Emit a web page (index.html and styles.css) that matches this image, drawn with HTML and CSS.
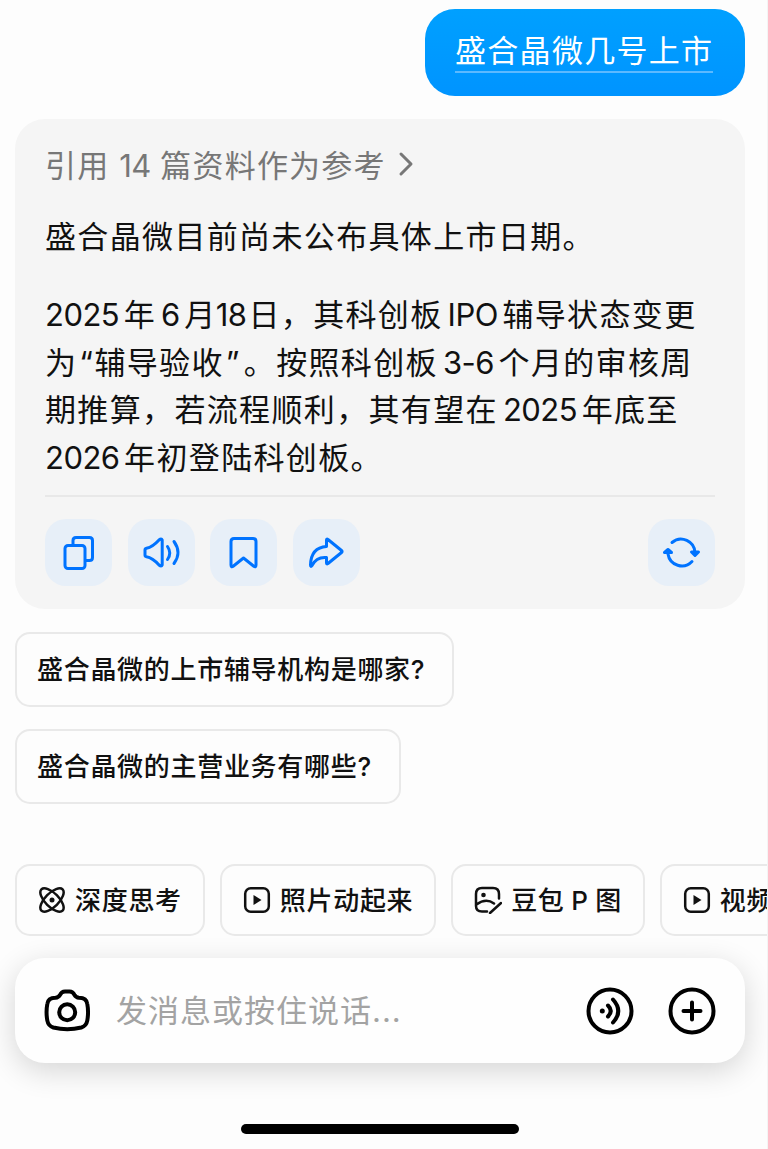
FILE: index.html
```html
<!DOCTYPE html>
<html lang="zh-CN">
  <head>
    <meta charset="UTF-8" />
    <meta name="viewport" content="width=device-width, initial-scale=1.0" />
    <title>豆包</title>
    <link rel="stylesheet" href="styles.css">
  </head>
  <body>
    <main class="chat">
      <div class="bubble"><span class="bubble-text">盛合晶微几号上市</span></div>

      <div class="answer">
        <div class="refs">
          <span>引用 <span class="num">14</span> 篇资料作为参考</span>
          <svg class="chevron" width="16" height="26" viewBox="0 0 16 26"><path d="M3 3 13 13 3 23" /></svg>
        </div>
        <p>盛合晶微目前尚未公布具体上市日期。</p>
        <p>
          <span class="line"><span class="latin first">2025</span>年<span class="latin">6</span>月<span class="latin tight">18</span>日，其科创板<span class="latin">IPO</span>辅导状态变更</span>
          <span class="line">为<span class="quote open">“</span>辅导验收<span class="quote close">”</span>。按照科创板<span class="latin">3-6</span>个月的审核周</span>
          <span class="line">期推算，若流程顺利，其有望在<span class="latin">2025</span>年底至</span>
          <span class="line"><span class="latin first">2026</span>年初登陆科创板。</span>
        </p>
        <div class="actions">
          <button class="action" aria-label="复制">
            <svg width="67" height="67" viewBox="0 0 67 67">
              <rect x="20" y="26.500" width="20" height="23" rx="3" />
              <path d="M28 25.500v-4q0-3 3-3h13.500q3 0 3 3v17q0 3-3 3H41" />
            </svg>
          </button>
          <button class="action" aria-label="朗读">
            <svg width="67" height="67" viewBox="0 0 67 67">
              <path d="M17 31q0-1.500 1.500-1.800 6-1 12.500-8.200 2.500-2 3.200 0v25q-.7 2-3.200 0-6.500-7.200-12.500-8.200-1.500-.3-1.500-1.800z" />
              <path d="M39.500 27.500q4.500 6.500 0 13M46 22.500q8 11 0 22" />
            </svg>
          </button>
          <button class="action" aria-label="收藏">
            <svg width="67" height="67" viewBox="0 0 67 67">
              <path d="M21 22.500q0-3 3-3h19q3 0 3 3v23.500q0 3-2.500 1L33.500 39 23.500 47q-2.500 2-2.500-1z" />
            </svg>
          </button>
          <button class="action" aria-label="分享">
            <svg width="67" height="67" viewBox="0 0 67 67">
              <path d="M33.500 21q0-1.500 1.500-.5L48.500 31.500q1.200 1 0 2L35 44.500q-1.500 1-1.500-.5v-5.500q-10-1-14.500 8-1.500 2-1.500-.5Q18 28.500 33.500 27.500z" />
            </svg>
          </button>
          <button class="action refresh" aria-label="重新生成">
            <svg width="67" height="67" viewBox="0 0 67 67">
              <path d="M24 23.500A14 14 0 0 1 47 34M44 42.500A14 14 0 0 1 20 35" />
              <path class="solid" d="M43.500 33h7L47 36.500zM16.500 33.500h7L20 30.500z" />
            </svg>
          </button>
        </div>
      </div>

      <div class="suggestions">
        <button class="chip suggestion">盛合晶微的上市辅导机构是哪家?</button>
        <button class="chip suggestion">盛合晶微的主营业务有哪些?</button>
      </div>
    </main>

    <nav class="tools">
      <button class="chip tool">
        <svg width="28" height="28" viewBox="0 0 28 28">
          <ellipse cx="14" cy="14" rx="15" ry="6.800" transform="rotate(45 14 14)" />
          <ellipse cx="14" cy="14" rx="15" ry="6.800" transform="rotate(-45 14 14)" />
          <circle class="dot" cx="14" cy="14" r="2.500" />
        </svg>
        <span>深度思考</span>
      </button>
      <button class="chip tool">
        <svg width="28" height="28" viewBox="0 0 28 28">
          <rect x="2.200" y="2.200" width="23.600" height="23.600" rx="5.500" />
          <path class="dot" d="M10.500 9v10l8-5z" />
        </svg>
        <span>照片动起来</span>
      </button>
      <button class="chip tool">
        <svg width="28" height="28" viewBox="0 0 28 28">
          <path d="M25 12.500V8q0-6-6-6H8Q2 2 2 8v12q0 5.500 6 5.500h5M2.500 18.500Q12 11.500 20 17.500M27 17 16 27" />
          <circle class="dot" cx="9.500" cy="9" r="2.300" />
        </svg>
        <span class="pic">豆包 P 图</span>
      </button>
      <button class="chip tool">
        <svg width="28" height="28" viewBox="0 0 28 28">
          <rect x="2.200" y="2.200" width="23.600" height="23.600" rx="5.500" />
          <path class="dot" d="M10.500 9v10l8-5z" />
        </svg>
        <span>视频</span>
      </button>
    </nav>

    <form class="composer">
      <svg width="48" height="48" viewBox="0 0 48 48">
        <path d="M17 8q1.500-3.500 5-3.500h4.500q3.500 0 5 3.500 1.500 2.500 4.500 2.800 7.500 0 8.300 6.200 1.500 8 0 16.500-1 5.500-6 7-14 3.500-28 0-5-1.500-6-7-1.500-8.500 0-16.500.8-6.200 8.200-6.200 3-.3 4.500-2.800z" />
        <circle cx="24.200" cy="25.200" r="8" />
      </svg>
      <input type="text" placeholder="发消息或按住说话..." />
      <svg width="48" height="48" viewBox="0 0 48 48">
        <circle cx="24" cy="24" r="21.500" />
        <path d="M22 18.500q5.500 5.500 0 11M27 12.500q10.500 11.500 0 23" />
        <circle class="dot" cx="16.300" cy="24" r="2.500" />
      </svg>
      <svg width="48" height="48" viewBox="0 0 48 48">
        <circle cx="24" cy="24" r="21.500" />
        <path d="M24 15.500v17M15.500 24h17" />
      </svg>
    </form>

    <div class="home-bar"></div>
  </body>
</html>
```
FILE: styles.css
```css
* {
  box-sizing: border-box;
  margin: 0;
  padding: 0;
}

body {
  width: 768px;
  height: 1149px;
  overflow: hidden;
  background-color: #fdfdfd;
  border-right: 1px solid #f4f4f4;
  font-family: Inter, "Noto Sans CJK SC", sans-serif;
  color: #111;
}

button,
input {
  font-family: inherit;
  border: none;
  background: none;
}

svg {
  flex: none;
  fill: none;
  stroke: currentColor;
  stroke-linecap: round;
  stroke-linejoin: round;
}

.chat {
  display: flex;
  flex-direction: column;
  padding: 9px 22px 0 15px;
}

/* User message */
.bubble {
  align-self: flex-end;
  width: 320px;
  height: 87px;
  padding: 20px 0 0 30px;
  border-radius: 30px;
  background: linear-gradient(#00a0ff, #0094ff);
  color: #fff;
}

.bubble-text {
  display: inline-block;
  height: 44px;
  border-bottom: 2px solid #5cb9ff;
  font-size: 31px;
  line-height: 44px;
  letter-spacing: 1.3px;
}

/* Answer card */
.answer {
  height: 490px;
  margin-top: 23px;
  padding: 20px 30px 0;
  border-radius: 30px;
  background-color: #f5f5f5;
}

.refs {
  display: flex;
  align-items: center;
  gap: 12px;
  height: 48px;
  color: #777;
  font-size: 31px;
  letter-spacing: 1.2px;
  white-space: nowrap;
}

.num {
  letter-spacing: -0.8px;
}

.chevron {
  margin-top: 2px;
  stroke-width: 3;
}

.answer p {
  font-size: 31px;
  line-height: 47.8px;
  letter-spacing: 1.35px;
  white-space: nowrap;
}

.refs + p {
  margin: 26px 0 30px;
}

.line {
  display: block;
}

.latin {
  margin: 0 4.500px 0 5px;
  letter-spacing: -0.5px;
}

.latin.first {
  margin-left: 0;
}

.latin.tight {
  margin: 0 2px 0 -1px;
}

.quote.open {
  margin-left: 2px;
}

.quote.close {
  margin: 0 3px 0 2px;
}

.actions {
  display: flex;
  gap: 15.500px;
  margin-top: 13px;
  padding-top: 22px;
  border-top: 2px solid #e8e8e8;
}

.action {
  width: 67px;
  height: 67px;
  border-radius: 21px;
  background-color: #e7eff8;
  color: #0073ff;
  stroke-width: 3;
}

.action svg {
  display: block;
}

.action .solid {
  fill: currentColor;
}

.refresh {
  margin-left: auto;
}

/* Chips */
.chip {
  border: 2px solid #e9e9e9;
  border-radius: 15px;
  color: #111;
  font-size: 26px;
  font-weight: 500;
  letter-spacing: 0.7px;
  white-space: nowrap;
}

.suggestions {
  display: flex;
  flex-direction: column;
  align-items: flex-start;
  gap: 22px;
  margin-top: 23px;
}

.suggestion {
  height: 75px;
  padding: 0 27px 5px 20px;
}

.tools {
  display: flex;
  gap: 15px;
  margin-top: 60px;
  padding-left: 15px;
  overflow: hidden;
}

.tool {
  display: flex;
  flex: none;
  align-items: center;
  gap: 9px;
  height: 72px;
  padding: 0 21px;
  stroke-width: 2.500;
}

.tool span {
  margin-top: -4px;
}

.pic {
  letter-spacing: 0.3px;
}

.dot {
  fill: currentColor;
  stroke: none;
}

/* Message input */
.composer {
  display: flex;
  align-items: center;
  width: 730px;
  height: 105px;
  margin: 22px 0 0 15px;
  padding: 0 29px 0 28px;
  border-radius: 30px;
  background-color: #fefefe;
  box-shadow: 0 8px 30px rgba(0, 0, 0, 0.16);
  color: #000;
  stroke-width: 4;
}

.composer input {
  flex: 1;
  min-width: 0;
  margin-left: 25px;
  font-size: 31px;
  letter-spacing: 1px;
}

.composer input::placeholder {
  color: #a3a3a3;
}

.composer svg:last-child {
  margin-left: 34px;
}

.home-bar {
  width: 278px;
  height: 10px;
  margin: 61px 0 0 241px;
  border-radius: 5px;
  background-color: #000;
}
```
